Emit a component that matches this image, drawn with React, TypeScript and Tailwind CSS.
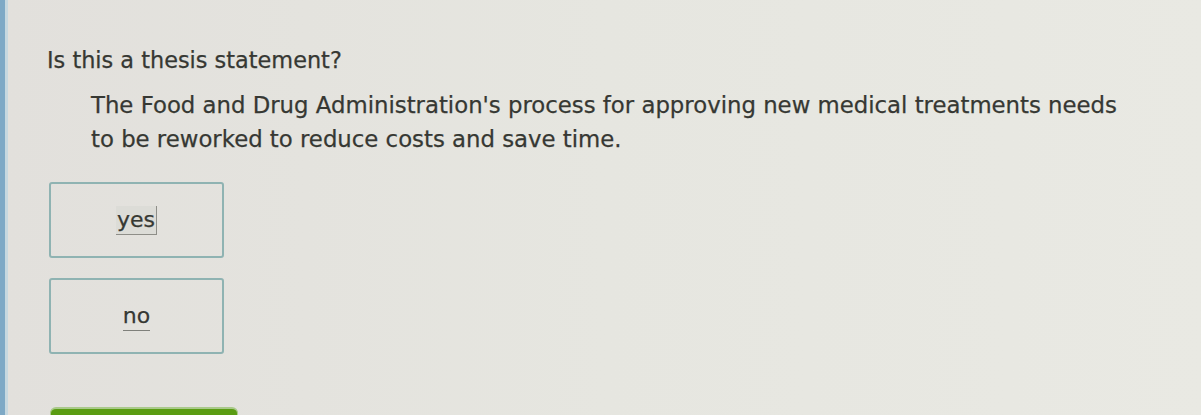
import React from "react";

export default function App() {
  return (
    <div
      className="w-[1201px] h-[415px] overflow-hidden flex bg-gradient-to-r from-[#e2e0dc] via-[#e6e6e0] to-[#e9e9e3]"
      style={{ fontFamily: '"DejaVu Sans", Verdana, sans-serif' }}
    >
      <div className="w-[5px] h-full bg-[#7ea9c6]" />
      <div className="w-[3px] h-full bg-[#c6d8e0]" />
      <div className="flex-1 flex flex-col pl-[39px] pt-[46px] text-[#363833] [-webkit-text-stroke:0.25px_#363833]">
        <div className="text-[22.4px] leading-[28px]">Is this a thesis statement?</div>
        <div className="ml-[44px] mt-[14px] text-[22.8px] leading-[34px] w-[1045px]">
          The Food and Drug Administration's process for approving new medical treatments needs to be reworked to reduce costs and save time.
        </div>
        <div className="mt-[26px] ml-[2px] flex flex-col gap-[20px]">
          <div className="w-[175px] h-[76px] border-2 border-[#8fb3b2] rounded-[3px] flex items-center justify-center">
            <span className="text-[22px] leading-[28px] pl-[1px] pr-[1px] border-b border-r border-[#8e8e88] bg-[#dcdcd7]">yes</span>
          </div>
          <div className="w-[175px] h-[76px] border-2 border-[#8fb3b2] rounded-[3px] flex items-center justify-center">
            <span className="text-[22px] leading-[28px] border-b border-[#7f807b]">no</span>
          </div>
        </div>
        <div className="mt-[53px] ml-[3px] w-[188px] h-[20px] bg-[#5a9c12] rounded-t-[6px] border-t-2 border-x border-[#a9c98a]" />
      </div>
    </div>
  );
}
